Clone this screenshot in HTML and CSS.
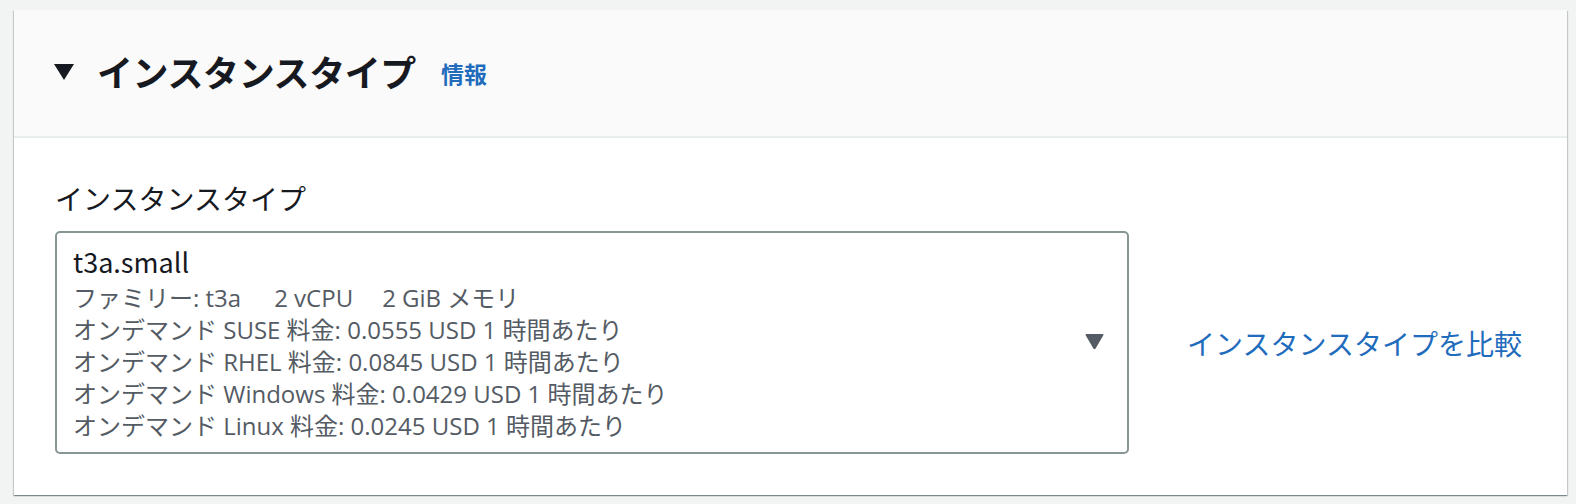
FILE: index.html
```html
<!DOCTYPE html>
<html lang="ja">
<head>
<meta charset="utf-8">
<link rel="stylesheet" href="styles.css">
</head>
<body>
<div class="page">
  <section class="card">
    <header class="card-header">
      <svg class="caret" width="20" height="16" viewBox="0 0 20 16"><path d="M0 0 H20 L10 16 Z" fill="#16191f"/></svg>
      <h2 class="title">インスタンスタイプ</h2>
      <a class="info">情報</a>
    </header>
    <div class="card-body">
      <div class="label">インスタンスタイプ</div>
      <div class="row">
        <div class="select">
          <div class="select-content">
            <div class="name">t3a.small</div>
            <div class="detail"><span class="tag">ファミリー: t3a</span><span class="tag tag-2">2 vCPU</span><span>2 GiB メモリ</span></div>
            <div class="detail">オンデマンド SUSE 料金: 0.0555 USD 1 時間あたり</div>
            <div class="detail">オンデマンド RHEL 料金: 0.0845 USD 1 時間あたり</div>
            <div class="detail">オンデマンド Windows 料金: 0.0429 USD 1 時間あたり</div>
            <div class="detail">オンデマンド Linux 料金: 0.0245 USD 1 時間あたり</div>
          </div>
          <svg class="arrow" width="19" height="16" viewBox="0 0 19 16"><path d="M1.5 0 H17.5 Q19 0 18.2 1.4 L10.6 14.6 Q9.5 16 8.4 14.6 L0.8 1.4 Q0 0 1.5 0 Z" fill="#545b64"/></svg>
        </div>
        <a class="compare">インスタンスタイプを比較</a>
      </div>
    </div>
  </section>
</div>
</body>
</html>
```

FILE: styles.css
```css
* { box-sizing: border-box; }
html, body { margin: 0; padding: 0; }
body {
  background: #f2f3f3;
  font-family: "Noto Sans CJK JP", "Noto Sans", sans-serif;
  color: #16191f;
  width: 1576px;
  height: 504px;
  overflow: hidden;
}
.page {
  padding: 10px 9px 9px 14px;
}
.card {
  background: #ffffff;
  box-shadow: 0 1px 1px 0 rgba(0, 28, 36, 0.3), 1px 1px 1px 0 rgba(0, 28, 36, 0.15), -1px 1px 1px 0 rgba(0, 28, 36, 0.15);
  height: 485px;
}
.card-header {
  background: #fafafa;
  border-bottom: 2px solid #eaeded;
  height: 128px;
  display: flex;
  align-items: center;
  padding: 0 0 4px 40px;
}
.caret { flex: none; margin-right: 23px; margin-top: 2px; }
.title {
  margin: 0;
  font-size: 36px;
  line-height: 48px;
  font-weight: 700;
  color: #16191f;
  letter-spacing: -0.4px;
}
.info {
  margin-left: 25px;
  font-size: 23px;
  font-weight: 700;
  color: #1f6cbd;
  line-height: 32px;
  margin-top: 4px;
}
.card-body {
  padding: 40px 40px 0 41px;
}
.label {
  font-size: 28px;
  line-height: 40px;
  margin-bottom: 13px;
  color: #16191f;
}
.row {
  display: flex;
  align-items: center;
}
.select {
  width: 1074px;
  height: 223px;
  border: 2px solid #879596;
  border-radius: 5px;
  padding: 9px 23px 10px 16px;
  display: flex;
  align-items: center;
  justify-content: space-between;
}
.select-content { align-self: flex-start; }
.name {
  font-size: 27px;
  line-height: 40px;
  color: #16191f;
}
.detail {
  font-family: "Open Sans", "Noto Sans CJK JP", sans-serif;
  font-size: 24px;
  line-height: 32px;
  color: #545b64;
  white-space: nowrap;
}
.tag { margin-right: 33px; }
.tag-2 { margin-right: 29px; }
.arrow { flex: none; }
.compare {
  margin-left: 58px;
  font-size: 28px;
  line-height: 40px;
  color: #1f6cbd;
  white-space: nowrap;
}
```
